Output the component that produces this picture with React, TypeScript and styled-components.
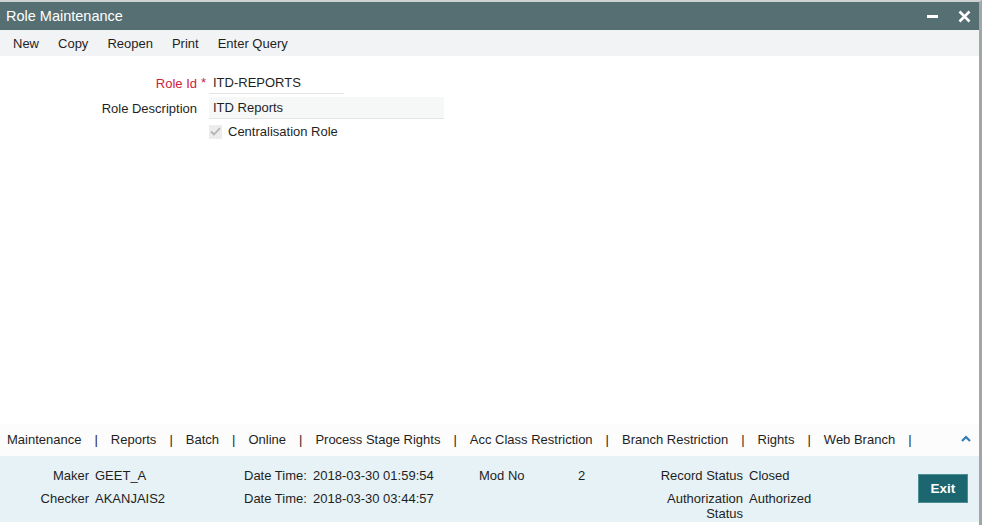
import React from 'react'
import styled, { createGlobalStyle } from 'styled-components'

const Global = createGlobalStyle`
  html, body {
    margin: 0;
    padding: 0;
    background: #ffffff;
  }
  body {
    font-family: "Liberation Sans", Arial, sans-serif;
    color: #1f1f1f;
  }
`

const Frame = styled.div`
  height: 525px;
  display: flex;
  flex-direction: column;
  box-sizing: border-box;
  border-top: 2px solid #cfd2d3;
  border-right: 3px solid #a3a6a7;
  padding-bottom: 3px;
  background: #ffffff;
`

const TitleBar = styled.header`
  height: 28px;
  flex: none;
  display: flex;
  align-items: center;
  padding: 0 7px 0 6px;
  background: #566f72;
  color: #ffffff;
`

const Title = styled.h1`
  margin: 0;
  font-size: 14.5px;
  font-weight: normal;
  flex: 1;
`

const WindowButton = styled.button`
  border: none;
  background: none;
  padding: 0;
  margin-left: 16px;
  width: 16px;
  height: 16px;
  display: flex;
  align-items: center;
  justify-content: center;
  cursor: pointer;
`

const Toolbar = styled.nav`
  height: 26px;
  flex: none;
  display: flex;
  align-items: center;
  gap: 19px;
  padding-left: 13px;
  background: #f2f3f5;
`

const ToolItem = styled.span`
  font-size: 13px;
  color: #1f1f1f;
`

const Body = styled.main`
  flex: 1;
  padding-top: 16px;
`

const Form = styled.div`
  display: grid;
  grid-template-columns: 197px 1fr;
  column-gap: 12px;
  row-gap: 3px;
  align-items: center;
`

const Label = styled.label<{ $required?: boolean }>`
  position: relative;
  text-align: right;
  font-size: 13px;
  color: ${p => (p.$required ? '#d2203c' : '#1f1f1f')};
`

const Star = styled.span`
  position: absolute;
  right: -9px;
  top: -1px;
  color: #d2203c;
`

const Field = styled.div<{ $width: number; $filled?: boolean }>`
  width: ${p => p.$width}px;
  height: 22px;
  box-sizing: border-box;
  display: flex;
  align-items: center;
  padding-left: 4px;
  font-size: 13px;
  background: ${p => (p.$filled ? '#f6f7f7' : 'transparent')};
  border-bottom: 1px solid #e2e4e5;
`

const CheckRow = styled.div`
  grid-column: 2;
  display: flex;
  align-items: center;
  gap: 6px;
  height: 19px;
  font-size: 13px;
`

const Box = styled.span`
  width: 13px;
  height: 14px;
  background: #ececec;
  display: flex;
  align-items: center;
  justify-content: center;
`

const TabBar = styled.nav`
  height: 32px;
  flex: none;
  box-sizing: border-box;
  padding: 0 8px 2px 7px;
  display: flex;
  align-items: center;
  background: #fcfcfc;
  font-size: 13px;
`

const Pipe = styled.span`
  padding: 0 13px;
`

const Chevron = styled.span`
  margin-left: auto;
  align-self: flex-start;
  margin-top: 6px;
`

const Footer = styled.footer`
  height: 66px;
  flex: none;
  box-sizing: border-box;
  padding: 12px 11px 0 0;
  background: #e6f2f5;
  display: grid;
  grid-template-columns: 89px 143px 63px 160px 93px 75px 84px 1fr auto;
  grid-template-rows: 15px auto;
  column-gap: 6px;
  row-gap: 8px;
  font-size: 13px;
  line-height: 15px;
`

const Cell = styled.span<{ $right?: boolean }>`
  text-align: ${p => (p.$right ? 'right' : 'left')};
`

const ExitButton = styled.button`
  grid-column: 9;
  grid-row: 1 / span 2;
  align-self: start;
  margin-top: 6px;
  width: 50px;
  height: 29px;
  background: #1c6670;
  border: 1px solid #4d8d95;
  color: #ffffff;
  font-family: "Liberation Sans", Arial, sans-serif;
  font-weight: bold;
  font-size: 13.5px;
  cursor: pointer;
`

const tools = ['New', 'Copy', 'Reopen', 'Print', 'Enter Query']
const tabs = [
  'Maintenance',
  'Reports',
  'Batch',
  'Online',
  'Process Stage Rights',
  'Acc Class Restriction',
  'Branch Restriction',
  'Rights',
  'Web Branch',
]

export default function App(): React.ReactElement {
  return (
    <>
      <Global />
      <Frame>
        <TitleBar>
          <Title>Role Maintenance</Title>
          <WindowButton aria-label="Minimize">
            <svg width="11" height="16" viewBox="0 0 11 16">
              <rect x="0" y="7" width="11" height="3" fill="#ffffff" />
            </svg>
          </WindowButton>
          <WindowButton aria-label="Close">
            <svg width="13" height="13" viewBox="0 0 13 13">
              <path d="M1.5 1.5 L11.5 11.5 M11.5 1.5 L1.5 11.5" stroke="#ffffff" strokeWidth="2.6" />
            </svg>
          </WindowButton>
        </TitleBar>
        <Toolbar>
          {tools.map(t => (
            <ToolItem key={t}>{t}</ToolItem>
          ))}
        </Toolbar>
        <Body>
          <Form>
            <Label $required>
              Role Id<Star>*</Star>
            </Label>
            <Field $width={135}>ITD-REPORTS</Field>
            <Label>Role Description</Label>
            <Field $width={235} $filled>ITD Reports</Field>
            <CheckRow>
              <Box>
                <svg width="11" height="9" viewBox="0 0 11 9">
                  <path d="M1 4.5 L4 7.5 L10 1" fill="none" stroke="#b3b3b3" strokeWidth="1.8" />
                </svg>
              </Box>
              Centralisation Role
            </CheckRow>
          </Form>
        </Body>
        <TabBar>
          {tabs.map(t => (
            <React.Fragment key={t}>
              <span>{t}</span>
              <Pipe>|</Pipe>
            </React.Fragment>
          ))}
          <Chevron>
            <svg width="10" height="7" viewBox="0 0 10 7">
              <path d="M1 6 L5 2 L9 6" fill="none" stroke="#2f7db3" strokeWidth="2.2" />
            </svg>
          </Chevron>
        </TabBar>
        <Footer>
          <Cell $right>Maker</Cell>
          <Cell>GEET_A</Cell>
          <Cell>Date Time:</Cell>
          <Cell>2018-03-30 01:59:54</Cell>
          <Cell>Mod No</Cell>
          <Cell>2</Cell>
          <Cell $right>Record Status</Cell>
          <Cell>Closed</Cell>
          <ExitButton>Exit</ExitButton>
          <Cell $right>Checker</Cell>
          <Cell>AKANJAIS2</Cell>
          <Cell>Date Time:</Cell>
          <Cell>2018-03-30 03:44:57</Cell>
          <Cell />
          <Cell />
          <Cell $right>Authorization Status</Cell>
          <Cell>Authorized</Cell>
        </Footer>
      </Frame>
    </>
  )
}
